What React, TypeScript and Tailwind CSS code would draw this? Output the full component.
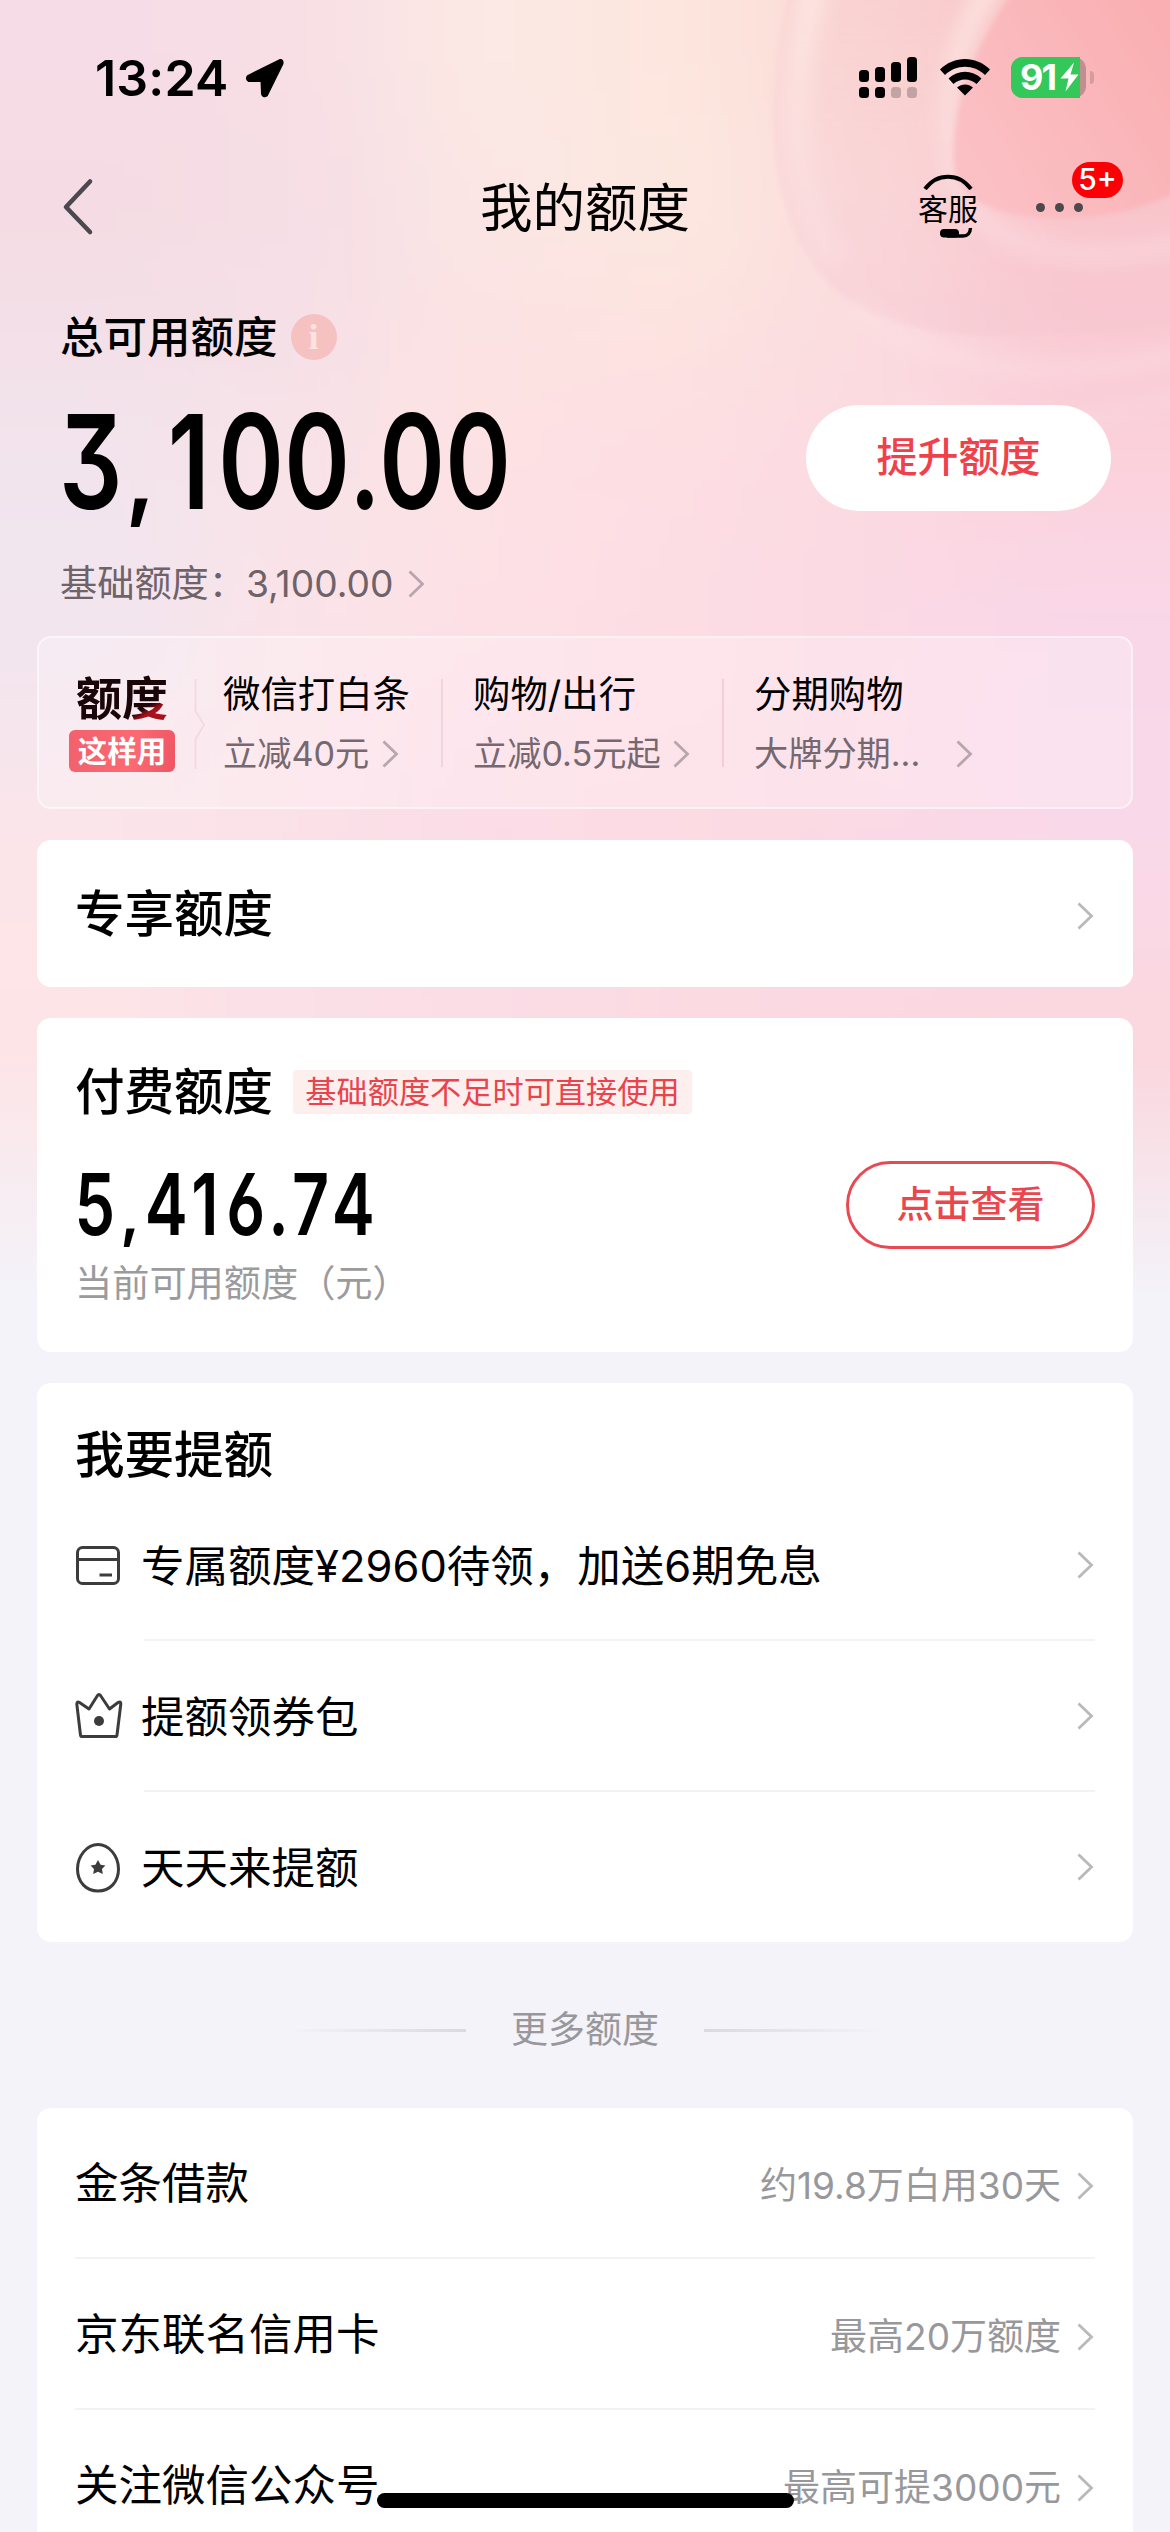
import React from 'react';

const FONT =
  "font-['Inter','Noto_Sans_CJK_SC',sans-serif]";

/* Rows of a coarse colour mesh; blurring the cells blends them together. */
const MESH: string[][] = [
  ['#f6dce6', '#f8dfe5', '#fce8e4', '#fde6de', '#fbd8d4', '#f9bcbf'],
  ['#f5dbe2', '#f6dee5', '#fae6e4', '#fde8e0', '#fbdbda', '#f9c2c6'],
  ['#f3e0e8', '#f6e0e7', '#fde2e2', '#fde2e0', '#fadce0', '#f9cad4'],
  ['#f2e4ed', '#f8e3e8', '#fde1e3', '#fddee3', '#fcd9e1', '#fbd2dc'],
  ['#f1e5ef', '#fae3e8', '#fde1e6', '#fddde4', '#fbd9e4', '#f9d7e8'],
  ['#f6e4ec', '#fbe2e8', '#fddde7', '#fddbe3', '#fadae6', '#f9d8ea'],
  ['#fde5e8', '#fbe0e8', '#fbdce6', '#fddae3', '#fbd8e4', '#f9d9e8'],
  ['#fde4e7', '#fbe0e6', '#fbdde6', '#fcdae2', '#fbd8e1', '#fbd7df'],
  ['#fde4e7', '#fbdfe6', '#fbdde6', '#fcdae2', '#fbd8e0', '#fbd6dd'],
  ['#fde4e7', '#fbdfe6', '#fbdde6', '#fcdae2', '#fbd8e0', '#fbd6dd'],
];

function Backdrop() {
  const cw = 195;
  const ch = 135;
  return (
    <svg className="absolute inset-0 h-[1350px] w-[1170px]" viewBox="0 0 1170 1350" aria-hidden="true">
      <defs>
        <filter id="mesh" filterUnits="userSpaceOnUse" x="-300" y="-300" width="1770" height="1950">
          <feGaussianBlur stdDeviation="65" />
        </filter>
        <filter id="soft" filterUnits="userSpaceOnUse" x="600" y="-100" width="700" height="700">
          <feGaussianBlur stdDeviation="9" />
        </filter>
        <filter id="edge" filterUnits="userSpaceOnUse" x="600" y="-100" width="700" height="700">
          <feGaussianBlur stdDeviation="2.5" />
        </filter>
        <linearGradient id="fade" x1="0" y1="0" x2="0" y2="1">
          <stop offset="0" stopColor="#f3f3f9" stopOpacity="0" />
          <stop offset="1" stopColor="#f3f3f9" />
        </linearGradient>
        <linearGradient id="petal" x1="0" y1="0" x2="0" y2="1">
          <stop offset="0" stopColor="#f7c9ca" stopOpacity="0.75" />
          <stop offset="0.5" stopColor="#f8ccd4" stopOpacity="0.6" />
          <stop offset="1" stopColor="#f6c4cf" stopOpacity="0.6" />
        </linearGradient>
        <linearGradient id="core" x1="0" y1="0.6" x2="1" y2="0">
          <stop offset="0" stopColor="#fbbfc3" />
          <stop offset="1" stopColor="#faaaad" />
        </linearGradient>
        <linearGradient id="rim" gradientUnits="userSpaceOnUse" x1="0" y1="0" x2="0" y2="420">
          <stop offset="0" stopColor="#fde9e4" stopOpacity="0.8" />
          <stop offset="0.5" stopColor="#fde3e6" stopOpacity="0.4" />
          <stop offset="1" stopColor="#fde3e8" stopOpacity="0.35" />
        </linearGradient>
      </defs>
      <g filter="url(#mesh)">
        {MESH.map((row, r) =>
          row.map((c, i) => {
            const left = i === 0 ? -300 : i * cw;
            const right = i === row.length - 1 ? 1470 : (i + 1) * cw;
            const top = r === 0 ? -300 : r * ch;
            const bottom = r === MESH.length - 1 ? 1650 : (r + 1) * ch;
            return <rect key={`${r}-${i}`} x={left} y={top} width={right - left + 1} height={bottom - top + 1} fill={c} />;
          }),
        )}
      </g>
      <g filter="url(#edge)">
        <path d="M792-20C762 90 762 210 826 280C880 340 990 350 1200 320V-20Z" fill="url(#petal)" opacity="0.6" />
      </g>
      <g filter="url(#soft)" fill="none" stroke="url(#rim)">
        <path d="M820-30C786 80 790 190 836 262" strokeWidth="26" />
        <path d="M1000-30C940 60 930 150 975 215C1030 262 1110 262 1200 240" strokeWidth="20" />
        <path d="M850 300C930 372 1040 386 1190 352" strokeWidth="18" />
        <path d="M905 400C1000 440 1090 430 1190 392" strokeWidth="12" />
      </g>
      <g filter="url(#edge)">
        <path d="M1022-20C975 40 950 110 954 165C958 205 1010 222 1080 218C1130 214 1160 200 1200 184V-20Z" fill="url(#core)" opacity="0.92" />
      </g>
      <rect x="0" y="1050" width="1170" height="245" fill="url(#fade)" />
      <rect x="0" y="1294" width="1170" height="60" fill="#f3f3f9" />
    </svg>
  );
}

function Chevron({ className = 'text-[#b9b9bd]' }: { className?: string }) {
  return (
    <svg className={`h-[30px] w-[18px] shrink-0 ${className}`} viewBox="0 0 18 30" fill="none">
      <path d="M2.5 2.5L15.5 15L2.5 27.5" stroke="currentColor" strokeWidth="2.8" />
    </svg>
  );
}

/* Narrow figures: each character sits in a cell of its own width. */
function Amount({ chars, className }: { chars: [string, string][]; className: string }) {
  return (
    <div className={`flex items-baseline font-['Inter'] font-semibold text-black [font-feature-settings:'cv03','cv09'] ${className}`}>
      {chars.map(([c, w], i) => (
        <span key={i} className={`flex justify-center ${w}`}>
          <span className={c === ',' ? 'inline-block text-[0.74em]' : 'inline-block scale-x-[0.76]'}>{c}</span>
        </span>
      ))}
    </div>
  );
}

function StatusBar() {
  return (
    <div className="flex h-[156px] items-start justify-between pt-[55px] pr-[76px] pl-[95px]">
      <div className="flex items-center gap-[14px]">
        <span className="text-[50px] leading-[46px] font-semibold tracking-[0.2px]">13:24</span>
        <svg className="h-[42px] w-[42px]" viewBox="0 0 42 42">
          <path d="M37 3.500L5 19.500Q3.500 22.500 6 23.500L19 23.500L19.500 37Q21 40 23.500 38L39 6.500Q39.500 3 37 3.500Z" fill="#000" stroke="#000" strokeWidth="3" strokeLinejoin="round" />
        </svg>
      </div>
      <div className="flex items-center pt-[1px]">
        <svg className="h-[42px] w-[60px]" viewBox="0 0 60 42">
          <rect x="1" y="14" width="10" height="12" rx="3.500" />
          <rect x="17" y="11" width="10" height="15" rx="3.500" />
          <rect x="33" y="6" width="10" height="20" rx="3.500" />
          <rect x="49" y="1" width="10" height="25" rx="3.500" />
          <rect x="1" y="31" width="10" height="11" rx="3.500" />
          <rect x="17" y="31" width="10" height="11" rx="3.500" />
          <rect x="33" y="31" width="10" height="11" rx="3.500" fillOpacity="0.22" />
          <rect x="49" y="31" width="10" height="11" rx="3.500" fillOpacity="0.22" />
        </svg>
        <svg className="ml-[20px] h-[40px] w-[54px]" viewBox="0 0 54 40">
          <path d="M2 12.500C16-1.500 38-1.500 52 12.500L47 18C36 7 18 7 7 18Z" />
          <path d="M10.500 21.500C20 12.500 34 12.500 43.500 21.500L38.500 27C32 21 22 21 15.500 27Z" />
          <path d="M19 30.500C24 26.500 30 26.500 35 30.500L27 38.500Z" />
        </svg>
        <div className="ml-[19px] flex items-center">
          <div className="flex h-[41px] w-[75px] rounded-[12px] bg-[#c08f90]">
            <div className="flex h-full w-[69px] items-center rounded-l-[12px] bg-[#34c759] pl-[9px] text-white">
              <span className="w-[40px] shrink-0 text-[36px] leading-[46px] font-bold tracking-[-2px]">91</span>
              <svg className="h-[30px] w-[19px] shrink-0" viewBox="0 0 19 30">
                <path d="M14 0.500L0.500 16.500H8.500L5.500 29.500L18.500 12.500H10.500Z" fill="#fff" />
              </svg>
            </div>
          </div>
          <div className="ml-[4px] h-[13px] w-[4px] rounded-r-full bg-[#d49c9e]" />
        </div>
      </div>
    </div>
  );
}

function NavBar() {
  return (
    <div className="grid h-[100px] grid-cols-[1fr_auto_1fr] items-center">
      <svg className="ml-[60px] h-[60px] w-[36px]" viewBox="0 0 36 60" fill="none">
        <path d="M30 5.500L6 31L30 56" stroke="#4c4850" strokeWidth="4.600" strokeLinecap="round" strokeLinejoin="round" />
      </svg>
      <h1 className="mt-[3px] text-[52.500px] leading-[60px] text-black">我的额度</h1>
      <div className="flex items-center">
        <div className="ml-[228px] flex h-[64px] w-[60px] flex-col items-center">
          <svg className="h-[16px] w-[50px]" viewBox="0 0 50 16" fill="none">
            <path d="M2 15C14-1.500 36-1.500 48 15" stroke="#000" strokeWidth="4" />
          </svg>
          <span className="mt-[1px] text-[30px] leading-[36px] whitespace-nowrap">客服</span>
          <svg className="mt-0 ml-[16px] h-[11px] w-[34px] shrink-0" viewBox="0 0 34 11" fill="none">
            <rect x="1" y="2" width="19" height="8.500" rx="4" fill="#000" />
            <path d="M8 9H24Q31 9 31.500 1" stroke="#000" strokeWidth="3.400" />
          </svg>
        </div>
        <div className="relative mt-[2px] ml-[58px] flex gap-[10px]">
          <i className="size-[9px] rounded-full bg-[#4c484c]" />
          <i className="size-[9px] rounded-full bg-[#4c484c]" />
          <i className="size-[9px] rounded-full bg-[#4c484c]" />
          <span className="absolute bottom-[14px] left-[36px] flex h-[36px] w-[51px] items-center justify-center rounded-full bg-[#fb0106] text-[30px] font-medium text-white">
            5+
          </span>
        </div>
      </div>
    </div>
  );
}

function Summary() {
  return (
    <section className="flex h-[380px] justify-between pr-[59px] pl-[60px]">
      <div>
        <div className="mt-[56px] flex h-[50px] items-center">
          <h2 className="text-[43.500px] leading-[50px] font-medium">总可用额度</h2>
          <span className="ml-[13px] flex size-[46px] items-center justify-center rounded-full bg-[#f6c1c1] font-['Liberation_Serif'] text-[36px] leading-none font-bold text-[#fbe3e4]">
            i
          </span>
        </div>
        <Amount
          className="mt-[25px] -ml-[2px] h-[150px] text-[131px] leading-[150px]"
          chars={[
            ['3', 'w-[65px]'],
            [',', 'w-[35px]'],
            ['1', 'w-[61px]'],
            ['0', 'w-[65px]'],
            ['0', 'w-[66px]'],
            ['.', 'w-[29px]'],
            ['0', 'w-[66px]'],
            ['0', 'w-[66px]'],
          ]}
        />
        <div className="mt-[23px] flex items-center text-[37.200px] leading-[48px] text-[#6f6268]">
          <span>基础额度：</span>
          <span>3,100.00</span>
          <Chevron className="ml-[14px] text-[#b8a6ad]" />
        </div>
      </div>
      <button className="mt-[149px] h-[106px] w-[305px] rounded-full bg-white text-[41px] font-medium text-[#f0414a]">
        提升额度
      </button>
    </section>
  );
}

function Tip({ title, sub, gap, className }: { title: string; sub: string; gap: string; className: string }) {
  return (
    <div className={`shrink-0 ${className}`}>
      <div className="text-[37.400px] leading-[44px] text-black">{title}</div>
      <div className="mt-[15px] flex items-center text-[34.200px] leading-[44px] text-[#756870]">
        <span>{sub}</span>
        <Chevron className={`text-[#b8a6ad] ${gap}`} />
      </div>
    </div>
  );
}

function UsagePanel() {
  return (
    <section className="mx-[37px] flex h-[173px] rounded-[14px] border-2 border-white/50 bg-white/25 pt-[35px] whitespace-nowrap">
      <div className="ml-[30px] flex w-[106px] flex-col items-center">
        <span className="bg-[linear-gradient(150deg,#1a0508_72%,#a8101c_80%)] bg-clip-text text-[46px] leading-[50px] font-bold text-transparent">额度</span>
        <span className="mt-[7px] flex h-[42px] w-[106px] items-center justify-center rounded-[6px] bg-[linear-gradient(100deg,#f2616c,#fb6a72_60%,#ee5563)] text-[29.500px] leading-[42px] font-bold text-white">
          这样用
        </span>
      </div>
      <svg className="mt-[6px] ml-[19px] h-[90px] w-[14px]" viewBox="0 0 14 90" fill="none">
        <path d="M1.500 0V32L10 46L1.500 60V90" stroke="#f3dae0" strokeWidth="2" />
      </svg>
      <Tip className="ml-[15px] w-[218px]" title="微信打白条" sub="立减40元" gap="ml-[12px]" />
      <div className="mt-[6px] h-[88px] w-[2px] bg-[#f3d3df]" />
      <Tip className="ml-[30px] w-[249px]" title="购物/出行" sub="立减0.5元起" gap="ml-[11px]" />
      <div className="mt-[6px] h-[88px] w-[2px] bg-[#f3cddb]" />
      <Tip className="ml-[30px]" title="分期购物" sub="大牌分期..." gap="ml-[35px]" />
    </section>
  );
}

function CardIcon() {
  return (
    <svg className="h-[50px] w-[48px]" viewBox="0 0 48 50" fill="none" stroke="#3c3c3e" strokeWidth="3">
      <rect x="2.500" y="6.500" width="41" height="36" rx="5" />
      <path d="M2.500 18.500H43.500M24.500 34H37" />
    </svg>
  );
}

function CrownIcon() {
  return (
    <svg className="h-[50px] w-[48px]" viewBox="0 0 48 50" fill="none" stroke="#3c3c3e" strokeWidth="3" strokeLinejoin="round">
      <path d="M5.500 43L1.800 12Q2 9 4.500 10.500L14 17L22.500 3.500Q24 1.500 25.500 3.500L34.500 17L43 10.500Q46 9 45.800 12L42 43Q41.800 44.500 40.500 44.500H7Q5.700 44.500 5.500 43Z" />
      <circle cx="24" cy="29" r="5" fill="#3c3c3e" stroke="none" />
    </svg>
  );
}

function EggIcon() {
  return (
    <svg className="h-[50px] w-[48px]" viewBox="0 0 48 50" fill="none">
      <path d="M23 1.500C34 1.500 43.500 13 43.500 26C43.500 39 35 48 23 48C11 48 2.500 39 2.500 26C2.500 13 12 1.500 23 1.500Z" stroke="#3c3c3e" strokeWidth="3" />
      <path d="M23 17L25.600 21.800L30.400 22.500L27 26L27.800 31L23 28.700L18.200 31L19 26L15.600 22.500L20.400 21.800Z" fill="#3c3c3e" />
    </svg>
  );
}

const RAISE_ROWS = [
  { icon: <CardIcon />, label: '专属额度¥2960待领，加送6期免息' },
  { icon: <CrownIcon />, label: '提额领券包' },
  { icon: <EggIcon />, label: '天天来提额' },
];

const MORE_ROWS = [
  { label: '金条借款', note: '约19.8万白用30天' },
  { label: '京东联名信用卡', note: '最高20万额度' },
  { label: '关注微信公众号', note: '最高可提3000元' },
];

export default function App() {
  return (
    <div className={`relative h-[2532px] w-[1170px] overflow-hidden bg-[#f3f3f9] text-black ${FONT}`}>
      <Backdrop />
      <div className="relative">
        <StatusBar />
        <NavBar />
        <Summary />
        <UsagePanel />

        <section className="mx-[37px] mt-[31px] flex h-[147px] items-center justify-between rounded-[14px] bg-white pr-[39px] pl-[38px]">
          <h2 className="text-[49.500px] leading-[60px] font-medium">专享额度</h2>
          <Chevron className="mt-[4px] text-[#b9b9bd]" />
        </section>

        <section className="mx-[37px] mt-[31px] h-[334px] rounded-[14px] bg-white pt-[44px] pr-[38px] pl-[38px]">
          <div className="flex items-center">
            <h2 className="text-[49.500px] leading-[60px] font-medium">付费额度</h2>
            <span className="ml-[20px] flex h-[44px] w-[399px] items-center justify-center rounded-[4px] bg-[#feefef] text-[31.200px] text-[#e9434c]">
              基础额度不足时可直接使用
            </span>
          </div>
          <div className="flex justify-between">
            <div>
              <Amount
                className="mt-[38px] -ml-[2px] h-[90px] text-[85px] leading-[90px]"
                chars={[
                  ['5', 'w-[44px]'],
                  [',', 'w-[26px]'],
                  ['4', 'w-[46px]'],
                  ['1', 'w-[32px]'],
                  ['6', 'w-[50px]'],
                  ['.', 'w-[16px]'],
                  ['7', 'w-[46px]'],
                  ['4', 'w-[40px]'],
                ]}
              />
              <div className="mt-[10px] text-[37.200px] leading-[48px] text-[#9b9b9d]">当前可用额度（元）</div>
            </div>
            <button className="mt-[39px] h-[88px] w-[249px] rounded-full border-3 border-[#e84a53] text-[37px] font-medium text-[#ea464e]">
              点击查看
            </button>
          </div>
        </section>

        <section className="mx-[37px] mt-[31px] h-[559px] rounded-[14px] bg-white pt-[42px] pr-[38px] pl-[38px]">
          <h2 className="text-[49.500px] leading-[60px] font-medium">我要提额</h2>
          <div className="mt-[5px]">
            {RAISE_ROWS.map((row, i) => (
              <div key={row.label} className="flex h-[151px] items-center">
                {row.icon}
                <div className={`ml-[21px] flex h-full flex-1 items-center justify-between border-b-2 pr-px ${i < 2 ? 'border-[#f3f3f5]' : 'border-transparent'}`}>
                  <span className="mt-[2px] -ml-[3px] text-[43.500px] leading-[50px]">{row.label}</span>
                  <Chevron />
                </div>
              </div>
            ))}
          </div>
        </section>

        <div className="mt-[63px] flex h-[50px] items-center justify-center">
          <div className="h-[3px] w-[178px] bg-linear-to-r from-transparent to-[#d9d9de]" />
          <span className="mx-[45px] text-[37px] leading-[50px] text-[#98989c]">更多额度</span>
          <div className="h-[3px] w-[178px] bg-linear-to-l from-transparent to-[#d9d9de]" />
        </div>

        <section className="mx-[37px] mt-[53px] h-[500px] rounded-t-[14px] bg-white pr-[38px] pl-[38px]">
          {MORE_ROWS.map((row) => (
            <div key={row.label} className="flex h-[151px] items-center border-b-2 border-[#f3f3f5] pr-px">
              <span className="text-[43.500px] leading-[50px]">{row.label}</span>
              <span className="mt-[7px] ml-auto text-[37px] leading-[50px] text-[#98989c]">{row.note}</span>
              <Chevron className="mt-[7px] ml-[15px] text-[#b9b9bd]" />
            </div>
          ))}
        </section>
      </div>
      <div className="absolute bottom-[24px] left-[377px] h-[15px] w-[417px] rounded-full bg-black" />
    </div>
  );
}
